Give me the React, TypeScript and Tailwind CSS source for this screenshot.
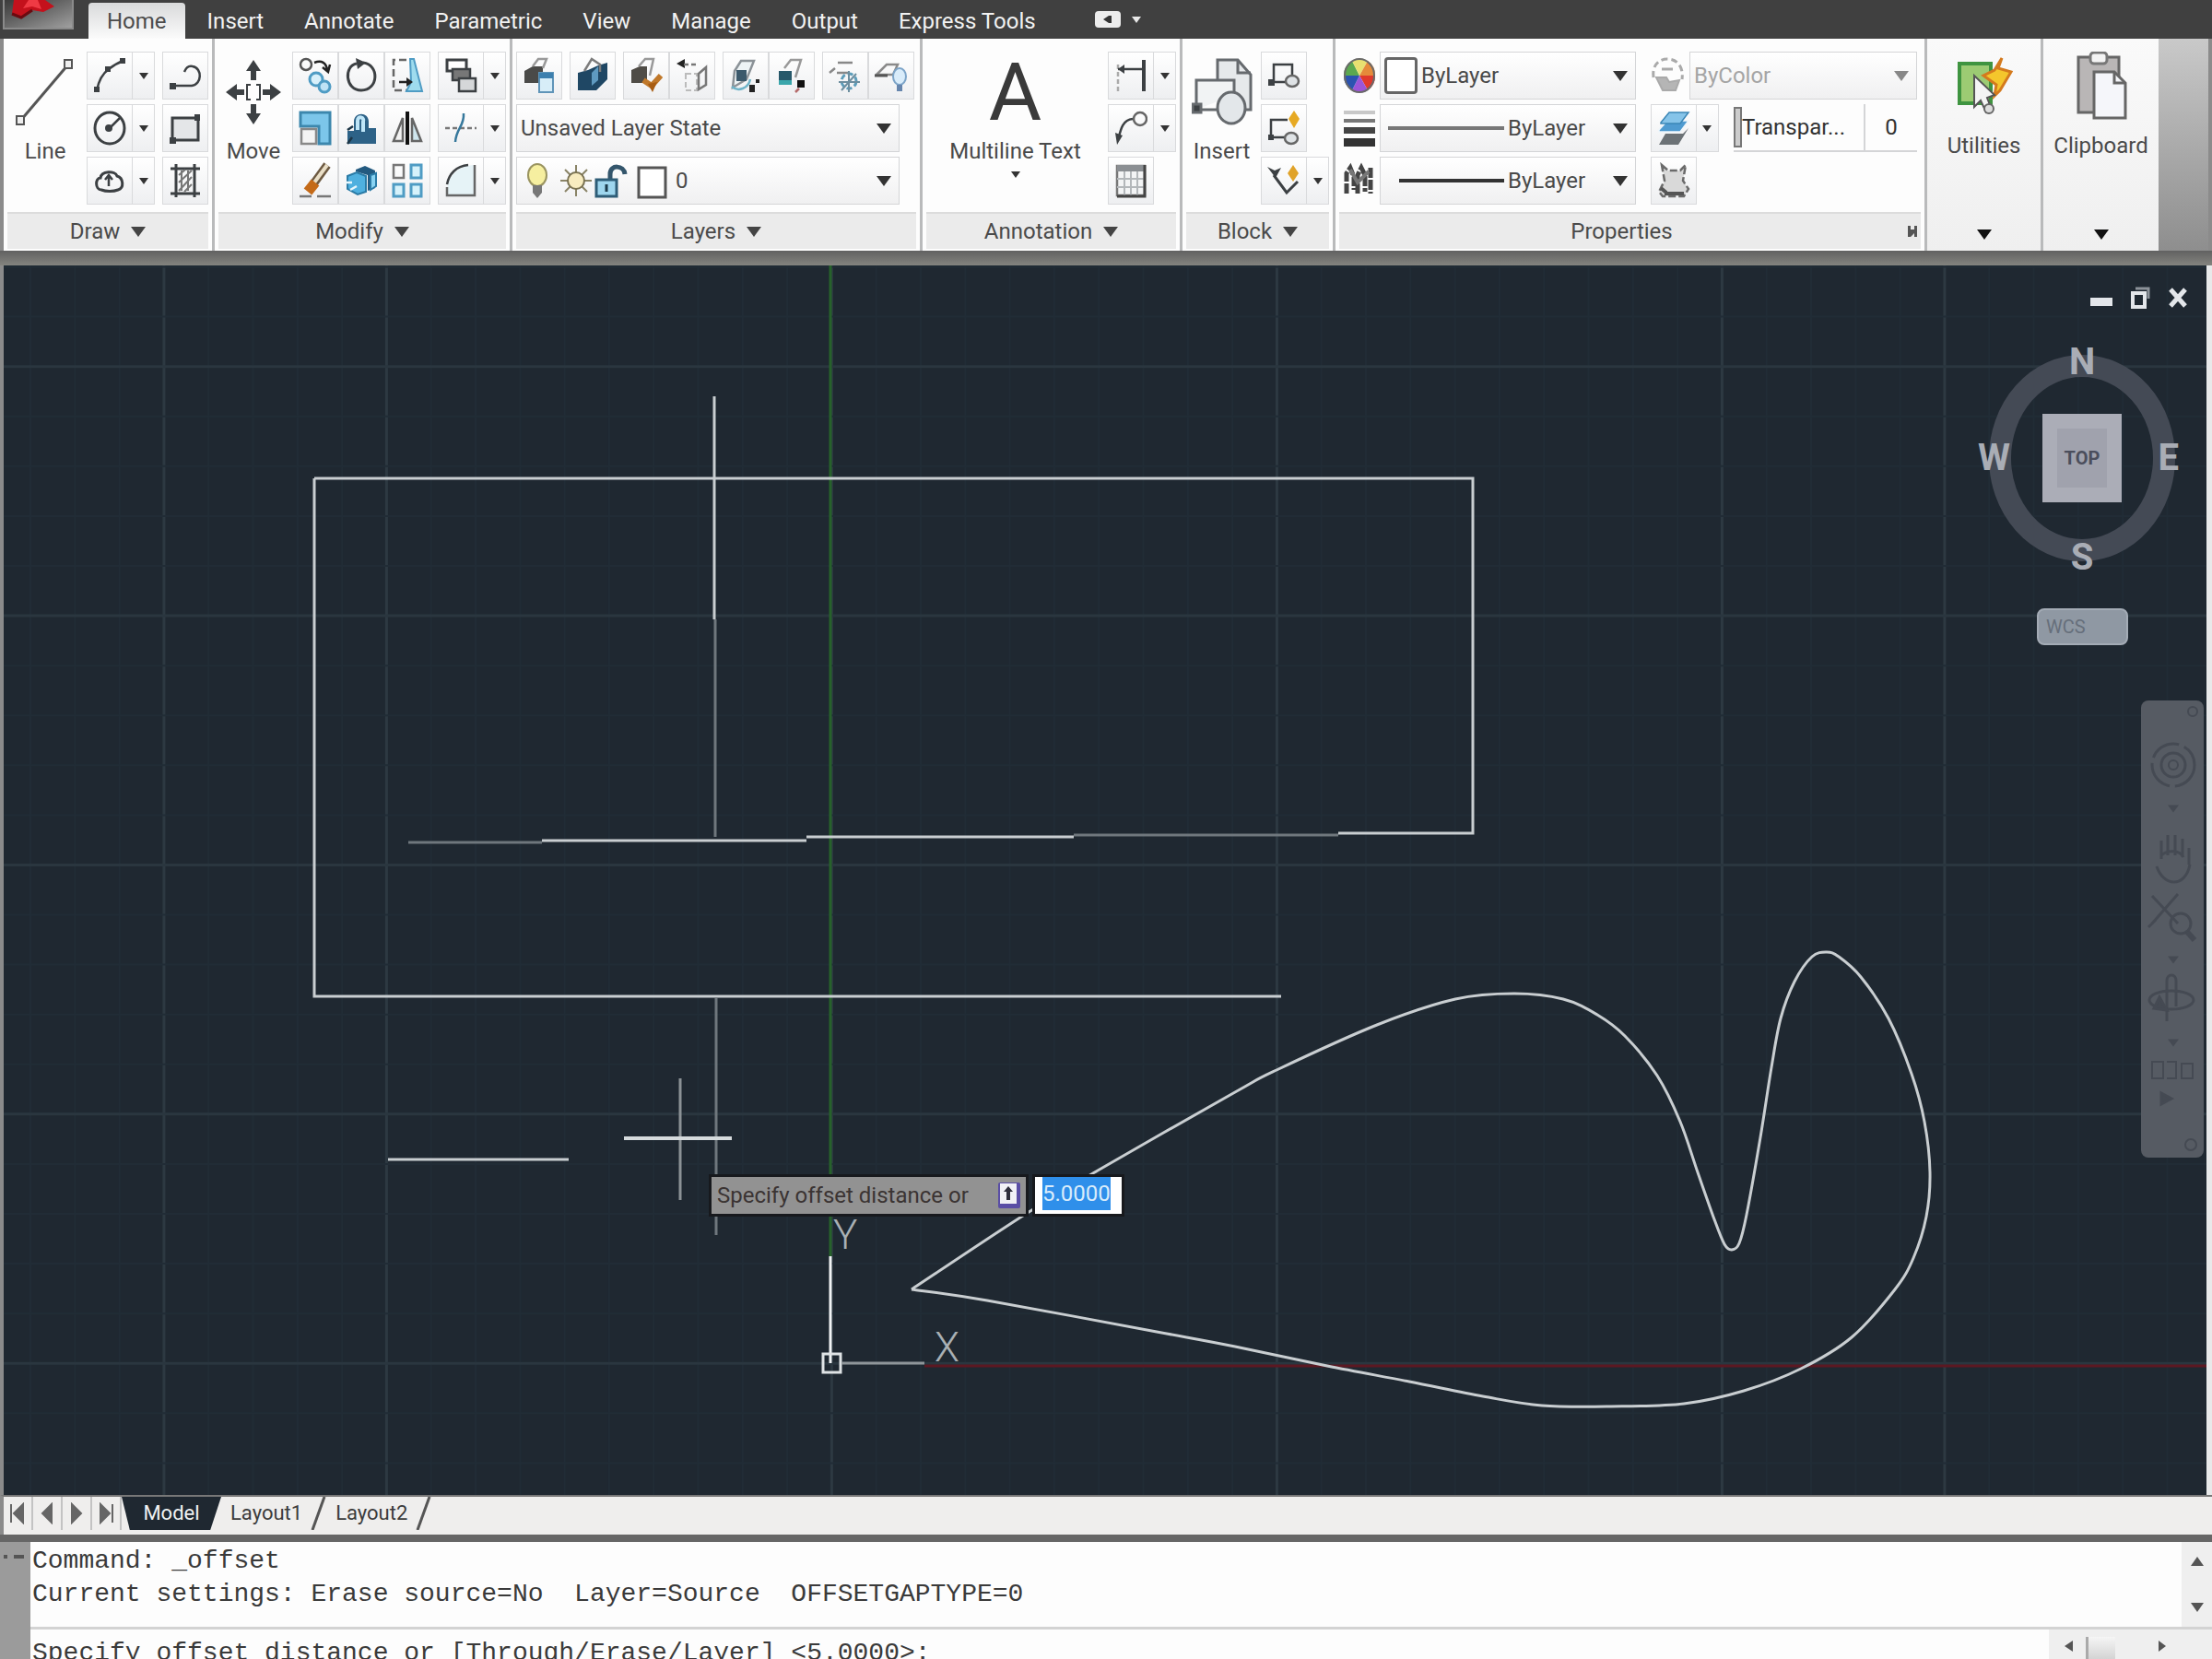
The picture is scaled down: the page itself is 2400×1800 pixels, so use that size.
import React from "react";

type Point = [number, number];

const INK = "#3c4043";
const BLUE = "#4f9cc4";

function Glyph({ w = 36, h = 40, children }: { w?: number; h?: number; children: React.ReactNode }) {
  return (
    <svg width={w} height={h} viewBox={`0 0 ${w} ${h}`} fill="none" stroke={INK} strokeWidth={2.5} aria-hidden="true">
      {children}
    </svg>
  );
}

function Caret({ color = "#333333", big = false }: { color?: string; big?: boolean }) {
  return (
    <svg width={big ? 16 : 10} height={big ? 11 : 7} viewBox="0 0 16 11" className="shrink-0" aria-hidden="true">
      <path d="M0 0H16L8 11Z" fill={color} />
    </svg>
  );
}

const icons = {
  arc: (
    <Glyph>
      <path d="M4 36C6 26 10 18 17 13C22 9 27 6 33 4" />
      <path d="M1 32h6v6h-6zM13 10h6v6h-6zM29 1h6v6h-6z" fill={INK} stroke="none" />
    </Glyph>
  ),
  polyline: (
    <Glyph>
      <path d="M6 31H25C36 30 37 12 26 10C22 9 19 11 17 16" />
      <path d="M1 28h7v7h-7z" fill={INK} stroke="none" />
    </Glyph>
  ),
  circle: (
    <Glyph>
      <ellipse cx="18" cy="20" rx="16" ry="17" strokeWidth={3} />
      <path d="M18 20L29 9" />
      <circle cx="17" cy="20" r="4" fill={INK} stroke="none" />
    </Glyph>
  ),
  rectangle: (
    <Glyph>
      <path d="M4 9H32V33H4Z" fill="#e4e6e8" strokeWidth={3} />
      <path d="M1 30h7v7h-7zM28 5h6v7h-6z" fill={INK} stroke="none" />
    </Glyph>
  ),
  cloud: (
    <Glyph>
      <path d="M9 30C2 30 2 17 8 17C9 9 24 9 26 15C33 17 34 28 27 30C22 32 14 32 9 30Z" strokeWidth={3} />
      <path d="M17 15V26M13 19L17 14L21 19" />
    </Glyph>
  ),
  hatch: (
    <Glyph>
      <path d="M8 2V38M28 2V38M2 7H34M2 34H34" strokeWidth={3} />
      <path d="M11 14L18 8M11 22L25 9M11 31L25 16M17 32L25 24M14 9V31M21 9V31" stroke="#777" strokeWidth={2} />
    </Glyph>
  ),
  copy: (
    <Glyph>
      <circle cx="8" cy="8" r="6" stroke="#555" />
      <path d="M17 6C25 3 30 6 31 14M26 11L32 16L34 8" stroke="#222" />
      <circle cx="19" cy="24" r="7" stroke={BLUE} strokeWidth={3} fill="#d8f0fa" />
      <circle cx="28" cy="32" r="6" stroke={BLUE} strokeWidth={3} fill="#bfe3f5" />
    </Glyph>
  ),
  rotate: (
    <Glyph>
      <path d="M20 6C38 8 37 36 18 36C0 36 -1 9 13 7" strokeWidth={3} />
      <path d="M12 1L23 6L14 13Z" fill={INK} stroke="none" />
    </Glyph>
  ),
  stretch: (
    <Glyph>
      <path d="M17 3H3V36H20" stroke="#666" strokeDasharray="8 4" />
      <path d="M21 2H25L34 37H17L22 27Z" fill="#9fdcee" stroke={BLUE} strokeWidth={2} />
      <path d="M9 27H21" stroke="#222" />
      <path d="M17 22L24 27L17 32Z" fill="#222" stroke="none" />
    </Glyph>
  ),
  offsetStack: (
    <Glyph>
      <path d="M3 3H24V15H3Z" fill="#fff" strokeWidth={3} />
      <path d="M9 13H28V25H9Z" fill="#777" />
      <path d="M16 23H34V37H16Z" fill="#d5d7d9" />
    </Glyph>
  ),
  scale: (
    <Glyph>
      <path d="M2 3H34V37H22V18H2Z" fill="#7cc6ea" stroke="#3c87ad" strokeWidth={3} />
      <path d="M3 21H19V37H3Z" fill="#f4f4f4" stroke="#888" />
    </Glyph>
  ),
  stamp: (
    <Glyph>
      <path d="M3 23H10V13C10 2 26 2 26 13V20H34V37H3Z" fill="#2d6287" stroke="none" />
      <path d="M14 22V12C14 6 22 8 20 13V24" stroke="#bfe6f8" strokeWidth={4} />
      <path d="M3 22L9 18M3 37L8 30" stroke="#1c3546" />
    </Glyph>
  ),
  mirror: (
    <Glyph>
      <path d="M18 2V38" stroke="#111" strokeWidth={4} />
      <path d="M13 9V34H3Z" fill="#f2f2f2" stroke="#666" />
      <path d="M23 9V34H33Z" fill="#cfe6ee" stroke="#666" />
    </Glyph>
  ),
  trim: (
    <Glyph>
      <path d="M1 20H35" stroke="#777" strokeDasharray="5 3" />
      <path d="M21 4C22 18 13 20 12 35" stroke="#36789c" />
    </Glyph>
  ),
  erase: (
    <Glyph>
      <path d="M31 3L15 25" stroke="#6d5a42" strokeWidth={9} />
      <path d="M31 3L17 22" stroke="#eadfc7" strokeWidth={4} />
      <path d="M18 22L10 32" stroke="#c46a18" strokeWidth={11} />
      <path d="M1 37H14M20 37H35" stroke="#777" />
    </Glyph>
  ),
  explode: (
    <Glyph>
      <path d="M12 8L22 4L33 9V28L25 31V14L12 10Z" fill="#235a80" stroke="none" />
      <path d="M3 15L13 11L23 15V32L14 35L3 29Z" fill="#4fb0df" stroke="#2b7ba6" strokeWidth={2} />
      <path d="M28 14L34 12V26L28 30Z" fill="#89d3f2" stroke="#2b7ba6" strokeWidth={2} />
      <path d="M1 22H8M6 30L13 26" stroke="#e7f6fc" />
    </Glyph>
  ),
  array: (
    <Glyph>
      <path d="M3 3H14V17H3Z" stroke="#777" />
      <path d="M22 3H33V17H22ZM3 24H14V37H3ZM22 24H33V37H22Z" fill="#d6f2fb" stroke={BLUE} strokeWidth={3} />
    </Glyph>
  ),
  fillet: (
    <Glyph>
      <path d="M3 36C2 18 12 4 33 3V36Z" fill="#e6f3f7" stroke="none" />
      <path d="M3 24C5 13 13 4 26 3" />
      <path d="M3 27V36H33V3" stroke="#666" />
    </Glyph>
  ),
  layerProps: (
    <Glyph>
      <path d="M2 15L11 10H22V28H2Z" fill="#4a4a48" stroke="none" />
      <path d="M11 10L17 2H26L22 12" stroke="#999" />
      <path d="M18 17H33V38H18Z" fill="#d7edf8" stroke="#5f94b8" strokeWidth={2} />
      <path d="M18 17H33V23H18Z" fill="#3c7fae" stroke="none" />
    </Glyph>
  ),
  layerMatch: (
    <Glyph>
      <path d="M2 17L13 14L24 9L34 6V24L22 36H2Z" fill="#1f4764" stroke="none" />
      <path d="M9 15L17 2L26 8V16" stroke="#7c7c7c" />
      <path d="M17 17L24 10V25L17 31Z" fill="#5f9ac0" stroke="none" />
    </Glyph>
  ),
  layerBrush: (
    <Glyph>
      <path d="M2 14L11 10H19V28H2Z" fill="#4f4c46" stroke="none" />
      <path d="M10 10L17 2H26L22 20" stroke="#999" />
      <path d="M15 25L24 31L34 20" stroke="#c0782a" strokeWidth={6} />
      <path d="M20 29L25 38L30 27Z" fill="#a85c12" stroke="none" />
    </Glyph>
  ),
  layerPrevious: (
    <Glyph>
      <path d="M1 7L10 2V12Z" fill="#222" stroke="none" />
      <path d="M9 8H24" stroke="#777" strokeDasharray="5 3" />
      <path d="M11 18H23V36H11Z" stroke="#bbb" strokeWidth={2} strokeDasharray="6 3" />
      <path d="M25 18L33 11V30L25 35Z" stroke="#777" />
    </Glyph>
  ),
  layerIsolate: (
    <Glyph>
      <path d="M6 15L13 4H27L19 24L4 33Z" stroke="#8b9297" fill="#edf3f5" />
      <path d="M8 14H19V26H8Z" fill="#3c5a6c" stroke="none" />
      <path d="M3 32C10 38 21 34 23 24" stroke="#6fb4c9" />
      <path d="M22 30h6v8h-6zM29 24h4v4h-4z" fill="#222" stroke="none" />
    </Glyph>
  ),
  layerUnisolate: (
    <Glyph>
      <path d="M10 12L17 3H28L22 22" stroke="#999" />
      <path d="M4 15H18V29H4Z" fill="#27586a" stroke="none" />
      <path d="M4 25H18V30H4Z" fill="#3aa6ab" stroke="none" />
      <path d="M24 25h8v8h-8z" fill="#111" stroke="none" />
      <path d="M22 38l4-4" stroke="#b56a6a" />
    </Glyph>
  ),
  layerFreeze: (
    <Glyph>
      <path d="M10 6H26M1 17L7 12M9 17H22" stroke="#888" />
      <circle cx="22" cy="26" r="8" stroke="#5d9dba" strokeWidth={3} strokeDasharray="6 3" />
      <path d="M22 15V38M11 27H34M14 36L30 18" stroke="#6d8e9f" strokeWidth={2} />
    </Glyph>
  ),
  layerOff: (
    <Glyph>
      <path d="M2 19L13 8H25L20 19Z" stroke="#8a8a8a" />
      <path d="M0 20H14" stroke="#555" strokeWidth={3} />
      <ellipse cx="27" cy="21" rx="7" ry="9" fill="#d9ecfa" stroke="#7ca4c8" strokeWidth={2} />
      <path d="M24 30H30V37H24Z" fill="#6585ad" stroke="none" />
    </Glyph>
  ),
  dimension: (
    <Glyph>
      <path d="M4 8V38" stroke="#aaa" strokeDasharray="5 3" />
      <path d="M4 13H31" />
      <path d="M4 13L11 8V18Z" fill={INK} stroke="none" />
      <path d="M32 3V37" strokeWidth={4} />
    </Glyph>
  ),
  leader: (
    <Glyph>
      <path d="M4 33C7 21 9 11 20 10" />
      <circle cx="28" cy="10" r="7" stroke="#666" />
      <path d="M1 25L9 28L3 38Z" fill={INK} stroke="none" />
    </Glyph>
  ),
  table: (
    <Glyph>
      <path d="M3 4H33V36H3Z" fill="#f3f4f5" stroke="#777" />
      <path d="M3 3H33V10H3Z" fill="#8b8f93" stroke="none" />
      <path d="M11 10V36M18 10V36M25 10V36M3 18H33M3 27H33" stroke="#b3b7ba" strokeWidth={2} />
      <path d="M33 3V37H3" stroke="#444" strokeWidth={3} />
    </Glyph>
  ),
  createBlock: (
    <Glyph>
      <path d="M7 27V8H27V22M3 27H20" strokeWidth={2.5} />
      <path d="M1 24h7v7h-7z" fill={INK} stroke="none" />
      <ellipse cx="27" cy="26" rx="7" ry="6" fill="#dfe3e6" stroke="#666" />
    </Glyph>
  ),
  editBlock: (
    <Glyph>
      <path d="M22 11H4V30H20" strokeWidth={2.5} />
      <path d="M1 27h6v6h-6z" fill={INK} stroke="none" />
      <ellipse cx="26" cy="31" rx="7" ry="6" fill="#dfe3e6" stroke="#666" />
      <path d="M29 1L35 10L29 20L23 10Z" fill="#e6a923" stroke="none" />
    </Glyph>
  ),
  blockAttribute: (
    <Glyph>
      <path d="M7 14L21 33L33 21" strokeWidth={3} />
      <path d="M0 5L8 9L15 6L9 17Z" fill={INK} stroke="none" />
      <path d="M28 3L34 12L28 21L22 12Z" fill="#e0a32a" stroke="none" />
    </Glyph>
  ),
  plotLayers: (
    <Glyph>
      <path d="M2 38L9 26H28L34 20L23 38Z" fill="#6c7276" stroke="none" />
      <path d="M2 22L11 12H34L25 24H2Z" fill="#4f9bd0" stroke="#eef6fb" strokeWidth={1.5} />
      <path d="M4 14L13 3H34L25 15H4Z" fill="#86c4e9" stroke="#3b86b6" strokeWidth={1.5} />
    </Glyph>
  ),
  list: (
    <Glyph>
      <path d="M5 3L12 9H25L31 3L28 20L34 29L29 37H6L2 32L8 20Z" fill="#d9d9d9" stroke="#6b6b6b" strokeDasharray="8 3" />
      <path d="M8 34H29M4 28L10 33" stroke="#555" strokeWidth={4} />
    </Glyph>
  ),
};

type IconName = keyof typeof icons;

function Tool({ icon, label, menu = false }: { icon: IconName; label: string; menu?: boolean }) {
  const face = "flex h-full items-center justify-center border border-[#d9dadc] bg-linear-to-b from-white to-[#eeeff1]";
  return (
    <div className="flex h-[52px]">
      <button type="button" aria-label={label} title={label} className={`${face} w-[50px]`}>
        {icons[icon]}
      </button>
      {menu && (
        <button type="button" aria-label={`${label} options`} className={`${face} w-6 border-l-0`}>
          <Caret />
        </button>
      )}
    </div>
  );
}

function ToolColumn({ children }: { children: React.ReactNode }) {
  return <div className="flex flex-col items-start gap-[5px]">{children}</div>;
}

function BigTool({ label, menu = false, children }: { label: string; menu?: boolean; children: React.ReactNode }) {
  return (
    <button type="button" className="flex h-full min-w-0 flex-1 flex-col items-center pt-1 leading-7 whitespace-nowrap">
      <span className="flex h-20 items-center justify-center">{children}</span>
      <span className="mt-2.5 mb-2">{label}</span>
      {menu && <Caret />}
    </button>
  );
}

function Panel({
  title,
  className,
  menu = true,
  corner = false,
  children,
}: {
  title: string;
  className: string;
  menu?: boolean;
  corner?: boolean;
  children: React.ReactNode;
}) {
  return (
    <section aria-label={title} className={`flex flex-col border-r-3 border-[#b9babb] bg-[#fdfdfd] ${className}`}>
      <div className="flex h-[188px] pt-[14px]">{children}</div>
      <div className="mx-1 flex h-10 items-center border-t-2 border-[#dcdcdc] bg-[#ebebeb]">
        <button type="button" className="flex flex-1 items-center justify-center gap-3 text-[#4a4a4a]">
          {title}
          {menu && <Caret big color="#444444" />}
        </button>
        {corner && (
          <button type="button" aria-label="Open properties palette" className="p-1">
            <svg width="10" height="12" viewBox="0 0 10 12" aria-hidden="true">
              <path d="M0 0H3V4H7V0H10V12H7V8L3 12H0Z" fill="#555" />
            </svg>
          </button>
        )}
      </div>
    </section>
  );
}

function Combo({
  label,
  value,
  disabled = false,
  alignRight = false,
  children,
}: {
  label: string;
  value: string;
  disabled?: boolean;
  alignRight?: boolean;
  children?: React.ReactNode;
}) {
  return (
    <label className="flex h-[52px] min-w-0 flex-1 items-center gap-1 border border-[#d4d5d7] bg-linear-to-b from-white to-[#f0f0f1] pr-2 pl-1">
      {children}
      <select
        aria-label={label}
        disabled={disabled}
        className={`min-w-0 appearance-none bg-transparent ${alignRight ? "mr-6 w-[86px]" : "flex-1"} ${disabled ? "text-[#a5a5a5] opacity-100" : "text-[#4a4a4a]"}`}
      >
        <option>{value}</option>
      </select>
      <Caret big color={disabled ? "#888888" : "#333333"} />
    </label>
  );
}

const ribbonTabs = ["Home", "Insert", "Annotate", "Parametric", "View", "Manage", "Output", "Express Tools"];

function RibbonTabs() {
  return (
    <header className="flex h-[42px] shrink-0 bg-[#404040]">
      <button
        type="button"
        aria-label="Application menu"
        className="ml-[3px] flex h-8 w-[77px] items-start border-2 border-t-0 border-[#8a8a8a] bg-linear-to-br from-[#3a3a3a] to-[#a0a0a0]"
      >
        <svg width="60" height="22" viewBox="0 0 60 22" aria-hidden="true">
          <path d="M10 0H44L54 7L42 13L30 11L18 19L8 15Z" fill="#c4111c" />
          <path d="M26 0L20 9L30 7L40 10L36 0Z" fill="#ef3a44" />
          <path d="M8 15L18 19L30 11" stroke="#6b0a10" strokeWidth="3" fill="none" />
        </svg>
      </button>
      <nav aria-label="Ribbon tabs" className="ml-4 flex gap-1 pt-[3px]">
        {ribbonTabs.map((tab, index) => (
          <button
            key={tab}
            type="button"
            className={
              index === 0
                ? "rounded-t-sm bg-linear-to-b from-[#d9dadb] to-[#fbfbfb] px-5 text-[#4c4c4c]"
                : "px-5 text-[#f2f2f2]"
            }
          >
            {tab}
          </button>
        ))}
      </nav>
      <button type="button" aria-label="Minimize ribbon" className="ml-11 flex items-center gap-3">
        <svg width="28" height="18" viewBox="0 0 28 18" aria-hidden="true">
          <rect width="28" height="18" rx="4" fill="#ececec" />
          <path d="M9 9L15 5H18V13H15Z" fill="#333" />
        </svg>
        <Caret color="#e8e8e8" />
      </button>
    </header>
  );
}

function LayerStateIcons() {
  return (
    <svg width="164" height="42" viewBox="0 0 164 42" fill="none" className="shrink-0" aria-hidden="true">
      <ellipse cx="18" cy="15" rx="10" ry="12" fill="#f6efa0" stroke="#9a9460" strokeWidth="2" />
      <path d="M13 26H23V34L18 40L13 34Z" fill="#777" />
      <path d="M60 4V38M43 21H77M48 9L72 33M72 9L48 33" stroke="#8a8467" strokeWidth="2" />
      <circle cx="60" cy="21" r="9" fill="#f8ecc0" stroke="#7a7252" strokeWidth="2" />
      <path d="M97 20V14C97 3 112 4 113 14" stroke="#34566c" strokeWidth="5" />
      <rect x="82" y="20" width="22" height="18" fill="#9ed6ee" stroke="#2e5d77" strokeWidth="3" />
      <path d="M93 25V33" stroke="#1b3a4b" strokeWidth="3" />
      <rect x="128" y="7" width="29" height="32" fill="#fff" stroke="#555" strokeWidth="3" />
    </svg>
  );
}

function Ribbon() {
  return (
    <div className="flex h-[230px] shrink-0 border-x-4 border-[#8b8b8b] bg-[#fdfdfd] text-[#4a4a4a]">
      <Panel title="Draw" className="w-[229px] shrink-0">
        <BigTool label="Line">
          <svg width="64" height="76" viewBox="0 0 64 76" fill="none" stroke="#555" aria-hidden="true">
            <path d="M6 68L57 8" strokeWidth="3" />
            <path d="M1 64h8v9h-8zM53 3h8v9h-8z" fill="#eee" strokeWidth="2" />
          </svg>
        </BigTool>
        <div className="flex gap-2 pr-1">
          <ToolColumn>
            <Tool icon="arc" label="Arc" menu />
            <Tool icon="circle" label="Circle" menu />
            <Tool icon="cloud" label="Revision cloud" menu />
          </ToolColumn>
          <ToolColumn>
            <Tool icon="polyline" label="Polyline" />
            <Tool icon="rectangle" label="Rectangle" />
            <Tool icon="hatch" label="Hatch" />
          </ToolColumn>
        </div>
      </Panel>

      <Panel title="Modify" className="w-[323px] shrink-0">
        <BigTool label="Move">
          <svg width="60" height="70" viewBox="0 0 60 70" fill={INK} aria-hidden="true">
            <path d="M30 0L38 12H33V22H27V12H22ZM30 70L38 58H33V48H27V58H22ZM0 35L12 26V32H20V38H12V44ZM60 35L48 26V32H40V38H48V44Z" />
            <path d="M27 27H23V43H27M33 27H37V43H33" stroke={INK} strokeWidth="2" fill="none" />
          </svg>
        </BigTool>
        <div className="flex gap-2 pr-1">
          <div className="flex">
            <ToolColumn>
              <Tool icon="copy" label="Copy" />
              <Tool icon="scale" label="Scale" />
              <Tool icon="erase" label="Erase" />
            </ToolColumn>
            <ToolColumn>
              <Tool icon="rotate" label="Rotate" />
              <Tool icon="stamp" label="Join" />
              <Tool icon="explode" label="Explode" />
            </ToolColumn>
            <ToolColumn>
              <Tool icon="stretch" label="Stretch" />
              <Tool icon="mirror" label="Mirror" />
              <Tool icon="array" label="Array" />
            </ToolColumn>
          </div>
          <ToolColumn>
            <Tool icon="offsetStack" label="Draw order" menu />
            <Tool icon="trim" label="Trim" menu />
            <Tool icon="fillet" label="Fillet" menu />
          </ToolColumn>
        </div>
      </Panel>

      <Panel title="Layers" className="w-[445px] shrink-0">
        <div className="flex flex-1 flex-col gap-[5px] pl-1">
          <div className="flex gap-2">
            <Tool icon="layerProps" label="Layer properties" />
            <Tool icon="layerMatch" label="Make object's layer current" />
            <div className="flex">
              <Tool icon="layerBrush" label="Match layer" />
              <Tool icon="layerPrevious" label="Previous layer" />
            </div>
            <div className="flex">
              <Tool icon="layerIsolate" label="Isolate layer" />
              <Tool icon="layerUnisolate" label="Unisolate layer" />
            </div>
            <div className="flex">
              <Tool icon="layerFreeze" label="Freeze layer" />
              <Tool icon="layerOff" label="Turn layer off" />
            </div>
          </div>
          <div className="mr-[22px] flex">
            <Combo label="Layer state" value="Unsaved Layer State" />
          </div>
          <div className="mr-[22px] flex">
            <Combo label="Current layer" value="0">
              <LayerStateIcons />
            </Combo>
          </div>
        </div>
      </Panel>

      <Panel title="Annotation" className="w-[282px] shrink-0">
        <BigTool label="Multiline Text" menu>
          <span className="text-[88px] leading-[76px] text-[#3a3a3a]">A</span>
        </BigTool>
        <div className="pr-1">
          <ToolColumn>
            <Tool icon="dimension" label="Linear dimension" menu />
            <Tool icon="leader" label="Multileader" menu />
            <Tool icon="table" label="Table" />
          </ToolColumn>
        </div>
      </Panel>

      <Panel title="Block" className="w-[166px] shrink-0">
        <BigTool label="Insert">
          <svg width="66" height="74" viewBox="0 0 66 74" fill="none" stroke="#666a6e" strokeWidth="3" aria-hidden="true">
            <path d="M28 24V2H50L64 18V56H52" fill="#e6e9eb" />
            <path d="M50 2V16H64" />
            <path d="M5 56V24H46V40" fill="#f1f3f4" />
            <path d="M5 56H30" />
            <path d="M1 50h9v9h-9z" fill={INK} />
            <ellipse cx="43" cy="54" rx="15" ry="17" fill="#e3e7ea" />
          </svg>
        </BigTool>
        <div className="pr-1">
          <ToolColumn>
            <Tool icon="createBlock" label="Create block" />
            <Tool icon="editBlock" label="Edit block" />
            <Tool icon="blockAttribute" label="Edit attribute" menu />
          </ToolColumn>
        </div>
      </Panel>

      <Panel title="Properties" className="min-w-0 flex-1" menu={false} corner>
        <div className="flex min-w-0 flex-[33] flex-col gap-[5px] pl-2">
          <div className="flex items-center gap-1">
            <svg width="36" height="40" viewBox="0 0 36 40" className="shrink-0" aria-hidden="true">
              <path d="M18 20L1 20A17 18 0 0 1 10 4Z" fill="#5ba84f" />
              <path d="M18 20L10 4A17 18 0 0 1 27 4Z" fill="#e8e070" />
              <path d="M18 20L27 4A17 18 0 0 1 35 20Z" fill="#e58a3a" />
              <path d="M18 20L35 20A17 18 0 0 1 27 36Z" fill="#e0392c" />
              <path d="M18 20L27 36A17 18 0 0 1 10 36Z" fill="#9b55d8" />
              <path d="M18 20L10 36A17 18 0 0 1 1 20Z" fill="#2b53b0" />
              <ellipse cx="18" cy="20" rx="16" ry="18" fill="none" stroke="#6a6a6a" strokeWidth="2" />
            </svg>
            <Combo label="Object color" value="ByLayer">
              <span className="h-10 w-9 shrink-0 rounded-sm border-3 border-[#666] bg-white" />
            </Combo>
          </div>
          <div className="flex items-center gap-1">
            <svg width="36" height="40" viewBox="0 0 36 40" className="shrink-0" aria-hidden="true">
              <path d="M1 1H35V5H1Z" fill="#c8c8c8" />
              <path d="M1 10H35V14H1Z" fill="#777" />
              <path d="M1 19H35V26H1Z" fill="#444" />
              <path d="M1 31H35V40H1Z" fill="#333" />
            </svg>
            <Combo label="Lineweight" value="ByLayer" alignRight>
              <span className="ml-1 h-1 flex-1 bg-[#777]" />
            </Combo>
          </div>
          <div className="flex items-center gap-1">
            <svg width="36" height="40" viewBox="0 0 36 40" fill="none" className="shrink-0" aria-hidden="true">
              <path d="M4 34V12L8 6L12 16V30M16 34V14L20 6L24 14V32M30 6V34" stroke="#444" strokeWidth="5" strokeDasharray="11 2" />
              <path d="M8 8L16 22L28 10" stroke="#777" strokeWidth="4" />
            </svg>
            <Combo label="Linetype" value="ByLayer" alignRight>
              <span className="ml-4 h-1 flex-1 bg-[#333]" />
            </Combo>
          </div>
        </div>
        <div className="flex min-w-0 flex-[30] flex-col gap-[5px] pr-2 pl-4">
          <div className="flex items-center gap-1">
            <svg width="38" height="40" viewBox="0 0 38 40" fill="none" stroke="#aaa" strokeWidth="3" className="shrink-0" aria-hidden="true">
              <path d="M3 22C1 8 10 2 18 2C28 2 36 10 34 24" strokeDasharray="7 4" />
              <path d="M6 22H17L20 27L31 25L27 36H13Z" fill="#b5b5b5" strokeWidth="2" />
              <path d="M12 13H24" />
            </svg>
            <Combo label="Plot style" value="ByColor" disabled />
          </div>
          <div className="flex gap-4">
            <Tool icon="plotLayers" label="Transparency mode" menu />
            <div className="flex h-[52px] min-w-0 flex-1 border-b-2 border-[#d4d5d7] text-[#333]">
              <span className="h-11 w-[9px] shrink-0 self-center border-2 border-[#777] bg-[#ccc]" />
              <label htmlFor="transparency" className="flex flex-1 items-center border-r-2 border-[#d4d5d7]">
                Transpar...
              </label>
              <input id="transparency" defaultValue="0" className="w-14 bg-transparent text-center" />
            </div>
          </div>
          <Tool icon="list" label="List" />
        </div>
      </Panel>

      <button
        type="button"
        className="flex w-[126px] shrink-0 flex-col items-center border-r-3 border-[#b9babb] bg-linear-to-b from-[#fafafa] to-[#efefef] pt-[18px]"
      >
        <svg width="62" height="70" viewBox="0 0 62 70" aria-hidden="true">
          <path d="M4 9H38V52H4Z" fill="#9ccb73" stroke="#3f9440" strokeWidth="4" />
          <path d="M50 3L46 14L60 18L48 38L42 44L44 32L30 22L42 16Z" fill="#f4c62c" stroke="#d47a1d" strokeWidth="3" />
          <path d="M20 22V56L27 49L33 62L39 59L34 46L42 43Z" fill="#f4f4f4" stroke="#555" strokeWidth="2" />
          <circle cx="36" cy="58" r="5" fill="#ddd" stroke="#666" strokeWidth="2" />
        </svg>
        <span className="mt-3">Utilities</span>
        <span className="mt-auto mb-3">
          <Caret big color="#111111" />
        </span>
      </button>
      <button
        type="button"
        className="flex w-[125px] shrink-0 flex-col items-center bg-linear-to-b from-[#fafafa] to-[#efefef] pt-[14px]"
      >
        <svg width="56" height="74" viewBox="0 0 56 74" fill="none" aria-hidden="true">
          <path d="M3 6H47V66H3Z" fill="#b9b6b6" stroke="#666" strokeWidth="3" />
          <rect x="16" y="1" width="18" height="12" rx="4" fill="#f4f4f4" stroke="#777" strokeWidth="3" />
          <path d="M20 22H42L54 34V72H20Z" fill="#f5f6fa" stroke="#666" strokeWidth="3" />
          <path d="M42 22V34H54" stroke="#666" strokeWidth="3" />
        </svg>
        <span className="mt-3">Clipboard</span>
        <span className="mt-auto mb-3">
          <Caret big color="#111111" />
        </span>
      </button>
      <div className="w-[54px] shrink-0 bg-linear-to-b from-[#c9c9c9] to-[#8e8e8e]" />
    </div>
  );
}

const splinePoints: Point[] = [
  [989, 1399], [1110, 1319], [1191, 1270], [1340, 1185], [1385, 1161], [1494, 1112], [1579, 1084], [1643, 1078],
  [1696, 1084], [1733, 1101], [1763, 1124], [1798, 1167], [1823, 1217], [1842, 1272], [1860, 1323], [1871, 1350],
  [1879, 1356], [1887, 1349], [1895, 1318], [1910, 1234], [1922, 1158], [1932, 1105], [1947, 1065], [1966, 1038],
  [1982, 1033], [1995, 1038], [2019, 1060], [2049, 1105], [2074, 1165], [2088, 1217], [2094, 1272], [2090, 1320],
  [2076, 1365], [2056, 1399], [2009, 1451], [1954, 1485], [1892, 1509], [1827, 1523], [1748, 1526], [1673, 1525],
  [1609, 1515], [1529, 1499], [1440, 1482], [1340, 1461], [1255, 1445], [1071, 1411], [989, 1399],
];

// Catmull-Rom spline through the control points, emitted as cubic segments.
function smoothPath(points: Point[]): string {
  return points.slice(0, -1).reduce((path, p1, i) => {
    const p0 = points[Math.max(i - 1, 0)];
    const p2 = points[i + 1];
    const p3 = points[Math.min(i + 2, points.length - 1)];
    const c1 = [p1[0] + (p2[0] - p0[0]) / 6, p1[1] + (p2[1] - p0[1]) / 6];
    const c2 = [p2[0] - (p3[0] - p1[0]) / 6, p2[1] - (p3[1] - p1[1]) / 6];
    return `${path}C${c1.join(" ")} ${c2.join(" ")} ${p2.join(" ")}`;
  }, `M${points[0].join(" ")}`);
}

const majorColumns = [3, 8, 18, 28, 38, 43];
const columns = Array.from({ length: 50 }, (_, i) => 33 + i * 48.3);
const rows = Array.from({ length: 26 }, (_, i) => 289.5 + i * 54.08);

function Drawing() {
  return (
    <svg viewBox="4 288 2390 1334" preserveAspectRatio="none" className="absolute inset-0 h-full w-full" fill="none" aria-label="Model space drawing">
      {columns.map((x, i) => (
        <path key={x} d={`M${x} 288V1622`} stroke={majorColumns.includes(i) ? "#2d3942" : "#212c36"} strokeWidth={majorColumns.includes(i) ? 3 : 2} />
      ))}
      {rows.map((y, i) => (
        <path key={y} d={`M4 ${y}H2394`} stroke={i % 5 === 2 ? "#2a363f" : "#212c36"} strokeWidth={i % 5 === 2 ? 3 : 2} />
      ))}
      <path d="M901 288V1363" stroke="#27622b" strokeWidth="3" />
      <path d="M1003 1482H2394" stroke="#5c1822" strokeWidth="3" />
      <g stroke="#c9ced1" strokeWidth="3">
        <path d="M341 519H1598V904H1452" />
        <path d="M341 519V1081H1390" />
        <path d="M775 430V672" />
        <path d="M588 912H875M875 908H1165" />
        <path d="M421 1258H617" />
        <path d={smoothPath(splinePoints)} />
      </g>
      <g stroke="#6f777d" strokeWidth="3">
        <path d="M776 672V908M777 1083V1340" />
        <path d="M443 914H588M1165 906H1452" />
      </g>
      <path d="M738 1170V1302" stroke="#8c9296" strokeWidth="3" />
      <path d="M677 1235H794" stroke="#d5dadc" strokeWidth="4" />
      <path d="M901 1363V1479" stroke="#f0f3f4" strokeWidth="3" />
      <path d="M893 1469H912V1489H893Z" stroke="#dfe3e5" strokeWidth="3" />
      <path d="M913 1479H1003" stroke="#8f969a" strokeWidth="3" />
    </svg>
  );
}

function ViewCube() {
  const letter = "absolute text-[40px] leading-10 font-bold text-[#a9adb5]";
  return (
    <div className="absolute top-[97px] right-[34px] h-[224px] w-[202px]">
      <svg viewBox="0 0 202 224" className="h-full w-full" fill="none" aria-hidden="true">
        <ellipse cx="101" cy="112" rx="89" ry="100" stroke="#444a55" strokeWidth="24" />
      </svg>
      <button type="button" className={`${letter} -top-3 left-1/2 -translate-x-1/2`}>N</button>
      <button type="button" className={`${letter} -bottom-4 left-1/2 -translate-x-1/2`}>S</button>
      <button type="button" className={`${letter} top-1/2 -left-3 -translate-y-1/2`}>W</button>
      <button type="button" className={`${letter} top-1/2 -right-1 -translate-y-1/2`}>E</button>
      <button
        type="button"
        className="absolute top-16 left-[58px] flex h-24 w-[86px] items-center justify-center border-[16px] border-[#abadb7] bg-[#a0a2ad] text-xl leading-5 font-bold text-[#4b4e5c]"
      >
        TOP
      </button>
    </div>
  );
}

function NavigationBar() {
  return (
    <div role="toolbar" aria-label="Navigation bar" className="absolute top-[472px] right-[3px] h-[496px] w-[68px] rounded-lg bg-[#565b63]">
      <svg viewBox="0 0 68 496" className="h-full w-full" fill="none" stroke="#454a53" strokeWidth="3" aria-hidden="true">
        <circle cx="56" cy="12" r="5" strokeWidth="2" />
        <circle cx="35" cy="70" r="23" strokeDasharray="34 6" />
        <circle cx="35" cy="70" r="13" />
        <circle cx="35" cy="70" r="5" strokeWidth="2" />
        <path d="M32 115H38L35 119Z" fill="#454a53" />
        <path d="M22 172V152M29 168V146M37 168V146M45 170V150M52 178V160M17 180C24 202 48 204 53 178M22 168C28 162 42 162 46 170" />
        <path d="M12 212L40 242M40 210L12 242M8 246L16 238" />
        <circle cx="43" cy="242" r="11" />
        <path d="M50 251L58 260" strokeWidth="6" />
        <path d="M32 279H38L35 283Z" fill="#454a53" />
        <path d="M28 348V304C28 296 38 296 38 304V332" />
        <ellipse cx="33" cy="325" rx="24" ry="10" />
        <path d="M20 322L14 334L28 336Z" fill="#454a53" />
        <path d="M32 369H38L35 373Z" fill="#454a53" />
        <path d="M12 392H24V410H12ZM28 392H38V410H28M44 394H56V410H44Z" strokeWidth="2" />
        <path d="M22 426L33 432L22 438Z" fill="#454a53" />
        <circle cx="54" cy="482" r="6" strokeWidth="2" />
      </svg>
    </div>
  );
}

function Canvas() {
  return (
    <main className="relative min-h-0 flex-1 overflow-hidden border-r-6 border-l-4 border-r-[#e8e9ea] border-l-[#8b8b8b] bg-[#1f2831]">
      <Drawing />
      <span className="absolute top-[1028px] left-[900px] text-[44px] leading-[48px] font-light text-[#a9b0b4]">Y</span>
      <span className="absolute top-[1150px] left-[1010px] text-[44px] leading-[48px] font-light text-[#a9b0b4]">X</span>

      <div className="absolute top-[20px] right-[18px] flex items-center gap-4 text-[#e3e6ea]">
        <button type="button" aria-label="Minimize drawing" className="p-0.5">
          <svg width="24" height="26" viewBox="0 0 24 26"><path d="M0 13H24V22H0Z" fill="currentColor" /></svg>
        </button>
        <button type="button" aria-label="Restore drawing">
          <svg width="24" height="26" viewBox="0 0 24 26" fill="none" stroke="currentColor" strokeWidth="4">
            <path d="M4 8H17V23H4Z" />
            <path d="M7 3H21V14" stroke="#8c9299" strokeWidth="3" />
          </svg>
        </button>
        <button type="button" aria-label="Close drawing" className="p-0.5">
          <svg width="22" height="26" viewBox="0 0 22 26" fill="none" stroke="currentColor" strokeWidth="5">
            <path d="M3 4L19 22M19 4L3 22" />
          </svg>
        </button>
      </div>

      <ViewCube />
      <button
        type="button"
        className="absolute top-[372px] right-[85px] h-10 w-[99px] rounded-lg border-2 border-[#a3abb5] bg-[#8f98a3] pl-2 text-left text-xl text-[#666f7b]"
      >
        WCS
      </button>
      <NavigationBar />

      <form className="absolute top-[986px] left-[765px] flex gap-1" onSubmit={(event) => event.preventDefault()}>
        <label
          htmlFor="offset-distance"
          className="flex h-[46px] w-[347px] items-center justify-between border-3 border-[#17191d] bg-[#929292] px-1.5 whitespace-nowrap text-[#3b3433]"
        >
          Specify offset distance or
          <svg width="24" height="28" viewBox="0 0 24 28" aria-hidden="true">
            <rect width="24" height="28" rx="2" fill="#5a4ea5" />
            <rect x="2" y="1" width="18" height="22" fill="#f1f1f6" />
            <path d="M11 4L16 10H13V19H9V10H6Z" fill="#2e2e3c" />
          </svg>
        </label>
        <span className="flex h-[46px] w-[100px] border-3 border-[#17191d] bg-white px-2 pb-1">
          <input id="offset-distance" defaultValue="5.0000" className="w-[74px] min-w-0 bg-[#2f8fea] text-[#d9ecfb]" />
        </span>
      </form>
    </main>
  );
}

const pagerShapes = [
  { label: "First layout", d: "M3 2V22M16 2V22L6 12Z" },
  { label: "Previous layout", d: "M15 2V22L5 12Z" },
  { label: "Next layout", d: "M5 2V22L15 12Z" },
  { label: "Last layout", d: "M4 2V22L14 12ZM17 2V22" },
];

function LayoutTabs() {
  return (
    <div className="flex h-[43px] shrink-0 border-t-2 border-l-4 border-t-[#777] border-l-[#8b8b8b] bg-[#efeeed] text-[22px] leading-8 text-[#3c3c3c]">
      {pagerShapes.map(({ label, d }) => (
        <button key={label} type="button" aria-label={label} className="flex h-9 w-8 items-center justify-center border-r-2 border-[#c3c3c3]">
          <svg width="20" height="24" viewBox="0 0 20 24" fill="#666" stroke="#666" strokeWidth="2" aria-hidden="true">
            <path d={d} />
          </svg>
        </button>
      ))}
      <div role="tablist" aria-label="Layouts" className="flex h-9">
        <button type="button" role="tab" aria-selected="true" className="relative w-[108px] text-[#f0f2f3]">
          <svg viewBox="0 0 110 36" preserveAspectRatio="none" className="absolute inset-0 h-full w-full" aria-hidden="true">
            <path d="M0 0H110L98 36H9Z" fill="#1f2831" />
          </svg>
          <span className="relative">Model</span>
        </button>
        {["Layout1", "Layout2"].map((name) => (
          <button key={name} type="button" role="tab" aria-selected="false" className="flex items-center gap-2 pl-2.5">
            {name}
            <svg width="18" height="36" viewBox="0 0 18 36" fill="none" stroke="#555" strokeWidth="3" aria-hidden="true">
              <path d="M16 0L3 36" />
            </svg>
          </button>
        ))}
      </div>
    </div>
  );
}

function CommandWindow() {
  return (
    <section
      aria-label="Command line"
      className="flex h-[135px] shrink-0 overflow-hidden border-t-8 border-[#666] bg-[#fdfdfd] font-['Liberation_Mono',monospace] text-[28px] leading-9 text-[#3a3a3a]"
    >
      <div className="w-[33px] shrink-0 bg-[#9b9b9b] pt-3 pl-1">
        <svg width="24" height="8" viewBox="0 0 24 8" aria-hidden="true">
          <path d="M0 2H4V6H0ZM11 2H22V6H11Z" fill="#555" />
        </svg>
      </div>
      <div className="flex min-w-0 flex-1 flex-col">
        <div className="flex h-[92px] shrink-0">
          <pre className="flex-1 pt-[3px] pl-0.5 font-[inherit]">
            {"Command: _offset\nCurrent settings: Erase source=No  Layer=Source  OFFSETGAPTYPE=0"}
          </pre>
          <div className="flex w-[33px] flex-col items-center justify-between bg-[#efefef] pt-4 pb-4">
            <svg width="14" height="10" viewBox="0 0 14 10" aria-hidden="true"><path d="M0 10H14L7 0Z" fill="#555" /></svg>
            <svg width="14" height="10" viewBox="0 0 14 10" aria-hidden="true"><path d="M0 0H14L7 10Z" fill="#555" /></svg>
          </div>
        </div>
        <div className="flex h-[46px] shrink-0 border-t-3 border-[#d3d3d3]">
          <label htmlFor="command-input" className="pt-2 pl-0.5 whitespace-pre">
            {"Specify offset distance or [Through/Erase/Layer] <5.0000>:"}
          </label>
          <input id="command-input" className="min-w-0 flex-1 bg-transparent outline-none" />
          <div className="flex w-[177px] items-start bg-[#efefef] pt-2">
            <svg width="40" height="24" viewBox="0 0 40 24" aria-hidden="true"><path d="M26 4V16L17 10Z" fill="#555" /></svg>
            <div className="h-8 w-8 border-l-3 border-[#aaa] bg-linear-to-b from-[#f5f5f5] to-[#c9c9c9]" />
            <svg width="70" height="24" viewBox="0 0 70 24" aria-hidden="true"><path d="M47 4V16L55 10Z" fill="#555" /></svg>
          </div>
        </div>
      </div>
    </section>
  );
}

export default function App() {
  return (
    <div className="flex h-screen min-h-[900px] flex-col overflow-hidden bg-[#8b8b8b] font-['Roboto',sans-serif] text-2xl leading-8">
      <RibbonTabs />
      <Ribbon />
      <div className="h-4 shrink-0 bg-linear-to-b from-[#616161] to-[#84847f]" />
      <Canvas />
      <LayoutTabs />
      <CommandWindow />
    </div>
  );
}
